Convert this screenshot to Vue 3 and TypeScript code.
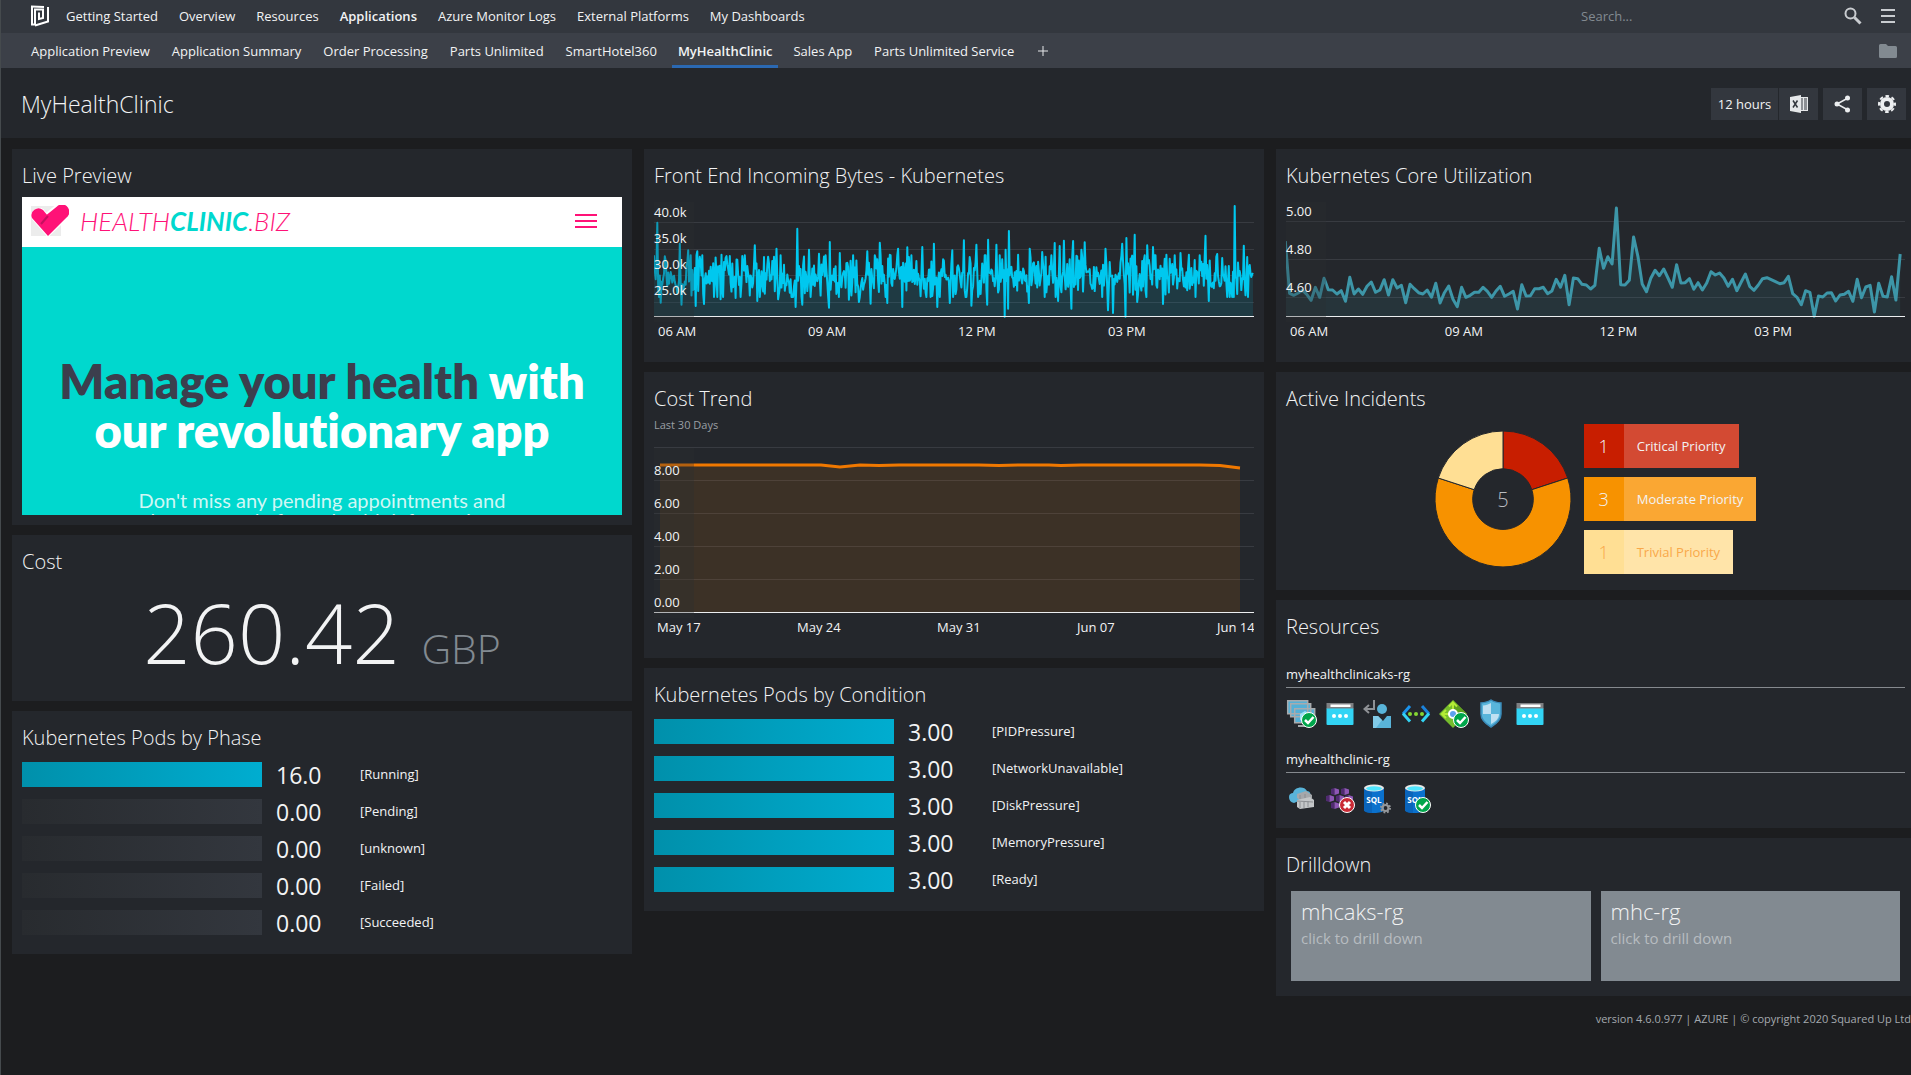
<script setup lang="ts">
interface NavItem { label: string; active?: boolean }
interface PodRow { value: string; label: string; full: boolean }
interface Incident { count: number; label: string; tone: string }

const mainNav: NavItem[] = [
  { label: 'Getting Started' },
  { label: 'Overview' },
  { label: 'Resources' },
  { label: 'Applications', active: true },
  { label: 'Azure Monitor Logs' },
  { label: 'External Platforms' },
  { label: 'My Dashboards' },
]

const subNav: NavItem[] = [
  { label: 'Application Preview' },
  { label: 'Application Summary' },
  { label: 'Order Processing' },
  { label: 'Parts Unlimited' },
  { label: 'SmartHotel360' },
  { label: 'MyHealthClinic', active: true },
  { label: 'Sales App' },
  { label: 'Parts Unlimited Service' },
]

const phases: PodRow[] = [
  { value: '16.0', label: '[Running]', full: true },
  { value: '0.00', label: '[Pending]', full: false },
  { value: '0.00', label: '[unknown]', full: false },
  { value: '0.00', label: '[Failed]', full: false },
  { value: '0.00', label: '[Succeeded]', full: false },
]

const conditions: PodRow[] = [
  { value: '3.00', label: '[PIDPressure]', full: true },
  { value: '3.00', label: '[NetworkUnavailable]', full: true },
  { value: '3.00', label: '[DiskPressure]', full: true },
  { value: '3.00', label: '[MemoryPressure]', full: true },
  { value: '3.00', label: '[Ready]', full: true },
]

const incidents: Incident[] = [
  { count: 1, label: 'Critical Priority', tone: 'critical' },
  { count: 3, label: 'Moderate Priority', tone: 'moderate' },
  { count: 1, label: 'Trivial Priority', tone: 'trivial' },
]

const hours = ['06 AM', '09 AM', '12 PM', '03 PM']
const days = ['May 17', 'May 24', 'May 31', 'Jun 07', 'Jun 14']

type Point = [number, number]
const toLine = (points: Point[]) =>
  points.map(([x, y]) => `${x.toFixed(1)},${y.toFixed(1)}`).join(' ')
const toArea = (points: Point[], base: number) =>
  `${points[0][0].toFixed(1)},${base} ${toLine(points)} ${points[points.length - 1][0].toFixed(1)},${base}`

// Core utilisation, one sample every five minutes, three units per pixel.
const coreSamples = [
  272, 429, 435, 428, 420, 432, 450, 411, 441, 384, 418, 419, 431, 421, 453, 381, 431, 416, 432, 408,
  395, 426, 419, 388, 434, 388, 413, 405, 457, 402, 415, 427, 431, 419, 441, 399, 458, 427, 407, 447,
  469, 411, 441, 435, 426, 426, 411, 423, 441, 422, 408, 438, 431, 423, 476, 403, 437, 436, 415, 415,
  411, 430, 422, 387, 411, 375, 463, 383, 385, 402, 404, 416, 405, 294, 354, 319, 341, 173, 403, 404,
  390, 260, 318, 401, 424, 384, 360, 376, 356, 383, 411, 343, 398, 397, 385, 417, 397, 419, 398, 364,
  374, 368, 383, 408, 387, 421, 396, 371, 408, 420, 404, 385, 382, 388, 394, 400, 397, 378, 430, 441,
  463, 421, 426, 498, 437, 440, 428, 427, 452, 434, 432, 423, 453, 387, 442, 410, 405, 485, 399, 438,
  440, 379, 449, 311,
]
const corePoints: Point[] = coreSamples.map((s, i) => [i * 4.3 - 0.7, (s - 155) / 3])

// Incoming bytes: per-minute noise with the notable peaks and dips pinned.
const pinned: Point[] = [
  [43, 217], [97, 280], [118, 300], [141, 303], [200, 313], [281, 285], [333, 295], [384, 235], [414, 298],
  [437, 310], [465, 275], [488, 308], [557, 303], [587, 277], [611, 313], [631, 295], [654, 291], [690, 290],
  [720, 280], [764, 300], [792, 270], [824, 283], [853, 268], [873, 283], [904, 242], [896, 298], [926, 313],
  [955, 295], [985, 305], [1016, 278], [1027, 287], [1037, 271], [1060, 272], [1080, 298], [1088, 276],
  [1140, 295], [1181, 280], [1191, 263], [1212, 253], [1242, 285], [1256, 290], [1288, 313], [1323, 308],
  [1344, 313], [1384, 256], [1414, 311], [1457, 167], [1478, 286], [1486, 320],
  [51, 457], [102, 463], [137, 467], [157, 461], [198, 447], [234, 443], [286, 452], [337, 447], [381, 470],
  [398, 463], [462, 472], [511, 448], [535, 455], [564, 460], [606, 458], [643, 470], [728, 470], [758, 458],
  [812, 466], [850, 463], [892, 499], [901, 475], [952, 458], [1024, 452], [1056, 475], [1147, 480],
  [1158, 488], [1188, 499], [1217, 455], [1280, 461], [1392, 452],
]
const byteCount = 720
let seed = 20200614
const random = () => {
  seed = (seed * 1664525 + 1013904223) % 4294967296
  return seed / 4294967296
}
const byteLevels: number[] = Array.from({ length: byteCount }, () => {
  const spread = random() + random() + random() - 1.5
  return 380 + Math.max(-65, Math.min(60, spread * 72))
})
for (const [x, y] of pinned) {
  byteLevels[Math.round(((x - 34) / 1467) * (byteCount - 1))] = y
}
byteLevels[byteCount - 3] = 380
byteLevels[byteCount - 2] = 372
byteLevels[byteCount - 1] = 368
const bytePoints: Point[] = byteLevels.map((v, i) => [i * (599 / (byteCount - 1)), (v - 155) / 3])

const costPoints: Point[] = [
  [6, 18], [167, 18], [186, 20], [206, 18], [225, 18.4], [245, 18], [325, 18], [345, 18.6], [365, 18],
  [395, 18], [407, 18.4], [427, 18], [546, 18], [566, 18.6], [586, 21],
]

// Pod glyphs in the Kubernetes service icon.
const cubes: Point[] = [[8, 3], [18, 3], [3, 10], [13, 10], [22, 10], [8, 17]]
const groupA = ['scaleset', 'web', 'identity', 'vnet', 'balancer', 'shield', 'web']
const groupB = ['registry', 'aks', 'sqlserver', 'sqldb']
const groups = [
  { name: 'myhealthclinicaks-rg', icons: groupA },
  { name: 'myhealthclinic-rg', icons: groupB },
]
</script>

<template>
  <div class="page">
    <header>
      <nav class="bar top" aria-label="Main">
        <a href="#" class="brand" aria-label="Home">
          <svg width="20" height="22" viewBox="0 0 20 22" fill="none" stroke="#fff" stroke-width="2">
            <path d="M2 1v18.500h3V4.500h8V13l-4 1V7.500" />
            <path d="M1 1.500l13 .5M18 2v14.500L5 20.500" />
          </svg>
        </a>
        <a v-for="item in mainNav" :key="item.label" href="#" :class="{ active: item.active }">{{ item.label }}</a>
        <div class="tools">
          <input type="search" placeholder="Search..." aria-label="Search" />
          <button type="button" class="plain" aria-label="Run search">
            <svg width="18" height="18" viewBox="0 0 18 18" fill="none" stroke="#c9ccd0" stroke-width="2">
              <circle cx="6.500" cy="6.500" r="5" /><path d="M10.500 10.500l6 6" stroke-width="3" />
            </svg>
          </button>
          <button type="button" class="plain" aria-label="Menu">
            <svg width="14" height="14" viewBox="0 0 14 14" stroke="#c9ccd0" stroke-width="2">
              <path d="M0 1h14M0 7h14M0 13h14" />
            </svg>
          </button>
        </div>
      </nav>
      <nav class="bar sub" aria-label="Applications">
        <a v-for="item in subNav" :key="item.label" href="#" :class="{ active: item.active }">{{ item.label }}</a>
        <button type="button" class="plain plus" aria-label="Add dashboard">
          <svg width="10" height="10" viewBox="0 0 10 10" stroke="#e6e8ea"><path d="M5 0v10M0 5h10" /></svg>
        </button>
        <button type="button" class="plain folder" aria-label="Folders">
          <svg width="18" height="14" viewBox="0 0 18 14" fill="#828a91">
            <path d="M1.500 0H7l2 2h7.500A1.500 1.500 0 0 1 18 3.500v9a1.500 1.500 0 0 1-1.500 1.500h-15A1.500 1.500 0 0 1 0 12.500v-11A1.500 1.500 0 0 1 1.500 0z" />
          </svg>
        </button>
      </nav>
      <div class="heading">
        <h1>MyHealthClinic</h1>
        <div class="actions">
          <div class="joined">
            <button type="button" class="range">12 hours</button>
            <button type="button" aria-label="Export to Excel">
              <svg width="18" height="18" viewBox="0 0 18 18">
                <path d="M10 2h8v14h-8z" fill="#e6e8ea" />
                <path d="M11 4h2M14 4h3M11 6h2M14 6h3M11 8h2M14 8h3M11 10h2M14 10h3M11 12h2M14 12h3M11 14h2M14 14h3" stroke="#33373e" />
                <path d="M0 2l11-2v18L0 16z" fill="#e6e8ea" />
                <path d="M3 5.500l4.500 7M7.500 5.500L3 12.500" stroke="#33373e" stroke-width="1.500" />
              </svg>
            </button>
          </div>
          <button type="button" aria-label="Share">
            <svg width="17" height="18" viewBox="0 0 17 18" fill="#eceef0">
              <path d="M14 3L3 9l11 6" fill="none" stroke="#eceef0" stroke-width="1.500" />
              <circle cx="13.500" cy="3" r="2.500" /><circle cx="3" cy="9" r="2.500" /><circle cx="13.500" cy="15" r="2.500" />
            </svg>
          </button>
          <button type="button" aria-label="Settings">
            <svg width="18" height="18" viewBox="0 0 18 18" fill="none" stroke="#eceef0">
              <circle cx="9" cy="9" r="5" stroke-width="4" />
              <circle cx="9" cy="9" r="8" stroke-width="2" stroke-dasharray="3.600 2.683" stroke-dashoffset="1.800" />
            </svg>
          </button>
        </div>
      </div>
    </header>

    <main class="columns">
      <div class="column">
        <section class="panel live">
          <h2>Live Preview</h2>
          <div class="preview">
            <div class="site-head">
              <svg width="38" height="32" viewBox="0 0 38 32">
                <path d="M0 1h30v30H0z" fill="#ececec" />
                <path d="M17 31L2 14A7 7 0 0 1 12 5l3 4 10-8A7.500 7.500 0 0 1 37 12z" fill="#ff1277" stroke="#fff" stroke-width="2" />
                <path d="M17 31L1 13A7 7 0 0 1 12 5l5 6 9-8.500A7 7 0 0 1 37 11z" fill="#ff1277" />
                <path d="M10 19l7-8" stroke="#c5105f" stroke-width="2" />
              </svg>
              <span class="site-name">HEALTH<b>CLINIC</b>.BIZ</span>
              <button type="button" class="plain site-menu" aria-label="Site menu">
                <svg width="22" height="14" viewBox="0 0 22 14" stroke="#ff1277" stroke-width="2">
                  <path d="M0 1h22M0 7h22M0 13h22" />
                </svg>
              </button>
            </div>
            <div class="hero">
              <p class="claim"><span>Manage your health</span> with<br />our revolutionary app</p>
              <p class="pitch">Don't miss any pending appointments and<br />keep control of your health information</p>
            </div>
          </div>
        </section>

        <section class="panel cost">
          <h2>Cost</h2>
          <p class="amount">260.42 <span>GBP</span></p>
        </section>

        <section class="panel">
          <h2>Kubernetes Pods by Phase</h2>
          <ul class="pods">
            <li v-for="row in phases" :key="row.label">
              <span class="meter" :class="{ full: row.full }"></span>
              <span class="value">{{ row.value }}</span>
              <span class="name">{{ row.label }}</span>
            </li>
          </ul>
        </section>
      </div>

      <div class="column">
        <section class="panel">
          <h2>Front End Incoming Bytes - Kubernetes</h2>
          <div class="chart hourly">
            <svg viewBox="0 0 600 120" preserveAspectRatio="none" width="100%" height="120">
              <path class="grid" d="M0 20.500h600M0 47.500h600M0 73.500h600M0 100.500h600" />
              <polygon :points="toArea(bytePoints, 114)" fill="#00c8ef" fill-opacity="0.120" />
              <polyline :points="toLine(bytePoints)" fill="none" stroke="#00c8ef" stroke-width="2" stroke-linejoin="round" />
              <path class="axis" d="M0 114.500h600" />
              <rect class="shade" width="40" height="120" />
            </svg>
            <div class="ylabels four"><span>40.0k</span><span>35.0k</span><span>30.0k</span><span>25.0k</span></div>
          </div>
          <div class="xlabels"><span v-for="h in hours" :key="h">{{ h }}</span></div>
        </section>

        <section class="panel">
          <h2>Cost Trend</h2>
          <p class="note">Last 30 Days</p>
          <div class="chart">
            <svg viewBox="0 0 600 171" preserveAspectRatio="none" width="100%" height="171">
              <path class="grid" d="M0 .5h600M0 33.500h600M0 66.500h600M0 99.500h600M0 132.500h600" />
              <polygon :points="toArea(costPoints, 165)" fill="#f07800" fill-opacity="0.120" />
              <polyline :points="toLine(costPoints)" fill="none" stroke="#f07800" stroke-width="3" />
              <path class="axis" d="M0 165.500h600" />
              <rect class="shade" y="1" width="40" height="170" />
            </svg>
            <div class="ylabels five"><span>8.00</span><span>6.00</span><span>4.00</span><span>2.00</span><span>0.00</span></div>
          </div>
          <div class="xlabels days"><span v-for="d in days" :key="d">{{ d }}</span></div>
        </section>

        <section class="panel">
          <h2>Kubernetes Pods by Condition</h2>
          <ul class="pods">
            <li v-for="row in conditions" :key="row.label">
              <span class="meter" :class="{ full: row.full }"></span>
              <span class="value">{{ row.value }}</span>
              <span class="name">{{ row.label }}</span>
            </li>
          </ul>
        </section>
      </div>

      <div class="column last">
        <section class="panel">
          <h2>Kubernetes Core Utilization</h2>
          <div class="chart hourly">
            <svg viewBox="0 0 619 120" preserveAspectRatio="none" width="100%" height="120">
              <path class="grid" d="M0 19.500h619M0 57.500h619M0 95.500h619" />
              <polygon :points="toArea(corePoints, 114)" fill="#3d96a8" fill-opacity="0.120" />
              <polyline :points="toLine(corePoints)" fill="none" stroke="#3d96a8" stroke-width="3" stroke-linejoin="round" />
              <path class="axis" d="M0 114.500h619" />
              <rect class="shade" width="40" height="120" />
            </svg>
            <div class="ylabels three"><span>5.00</span><span>4.80</span><span>4.60</span></div>
          </div>
          <div class="xlabels"><span v-for="h in hours" :key="h">{{ h }}</span></div>
        </section>

        <section class="panel">
          <h2>Active Incidents</h2>
          <div class="incidents">
            <svg width="136" height="136" viewBox="-68 -68 136 136" stroke="#24272c" stroke-width="1">
              <path d="M0-68A68 68 0 0 1 64.700-21L28.800-9.300A30.300 30.300 0 0 0 0-30.300z" fill="#c81e00" />
              <path d="M64.700-21A68 68 0 1 1-64.700-21L-28.800-9.300A30.300 30.300 0 1 0 28.800-9.300z" fill="#f79200" />
              <path d="M-64.700-21A68 68 0 0 1 0-68V-30.300A30.300 30.300 0 0 0-28.800-9.300z" fill="#ffdf94" />
              <text y="8" text-anchor="middle" class="total">5</text>
            </svg>
            <ul>
              <li v-for="i in incidents" :key="i.label" :class="i.tone"><b>{{ i.count }}</b><span>{{ i.label }}</span></li>
            </ul>
          </div>
        </section>

        <section class="panel resources">
          <h2>Resources</h2>
          <div v-for="g in groups" :key="g.name" class="group">
            <h3>{{ g.name }}</h3>
            <div class="icons">
              <svg v-for="(icon, n) in g.icons" :key="n" width="32" height="32" viewBox="0 0 32 32">
                <template v-if="icon === 'scaleset'">
                  <g fill="#55b0d6" stroke="#a8abae" stroke-width="1.500">
                    <path d="M1.700 2.700h20v13h-20zM4.700 5.700h20v13h-20zM8.700 10.700h20v14h-20z" />
                  </g>
                  <path d="M12 27h12v2H12z" fill="#a8abae" />
                  <path d="M14 16l5-3 5 3v6l-5 2-5-2z" fill="#9be3f8" />
                </template>
                <template v-else-if="icon === 'web'">
                  <path d="M2.500 5h27v6h-27z" fill="#7e8083" />
                  <path d="M6.500 6.500h20v2.500h-20z" fill="#fff" />
                  <path d="M2.500 10.500h27V26a1 1 0 0 1-1 1h-25a1 1 0 0 1-1-1z" fill="#32d4f5" />
                  <g fill="#fff"><circle cx="10" cy="18" r="2" /><circle cx="16" cy="18" r="2" /><circle cx="22" cy="18" r="2" /></g>
                </template>
                <template v-else-if="icon === 'identity'">
                  <path d="M12 2v9H3M7 7l-4.500 4L7 15" fill="none" stroke="#8f9296" stroke-width="2" />
                  <circle cx="20" cy="11" r="5" fill="#59b4d9" />
                  <path d="M11 18h5l5 5 4-5h4v12H11z" fill="#59b4d9" />
                  <path d="M11 18h5l4 4-6 8h-3z" fill="#82cbe8" />
                </template>
                <template v-else-if="icon === 'vnet'">
                  <g fill="none" stroke-width="3">
                    <path d="M10 8l-7 8" stroke="#1b93eb" /><path d="M3 15.500l7 8" stroke="#32d4f5" />
                    <path d="M22 8l7 8" stroke="#1b83db" /><path d="M29 15.500l-7 8" stroke="#32d4f5" />
                  </g>
                  <g fill="#86d633"><circle cx="10" cy="16" r="2" /><circle cx="16" cy="16" r="2" /><circle cx="22" cy="16" r="2" /></g>
                </template>
                <template v-else-if="icon === 'balancer'">
                  <path d="M15 2l14 14-14 14L1 16z" fill="#76bc2d" />
                  <path d="M15 2l14 14H15z" fill="#5ea01f" />
                  <path d="M15 5v8M11 8.500l4-4 4 4M11 16H4M8 12l-4 4 4 4M26 16h-8" fill="none" stroke="#b4ec36" stroke-width="2" />
                  <circle cx="15" cy="16" r="4" fill="#5ea0ef" stroke="#fff" stroke-width="2" />
                </template>
                <template v-else-if="icon === 'shield'">
                  <path d="M15 2c3 2 6 2.500 10 3v11c0 6-5 10-10 13C10 26 5 22 5 16V5c4-.5 7-1 10-3z" fill="#58b5db" stroke="#3a8ab8" stroke-width="1.500" />
                  <path d="M15 5v11H7V7.500c3 0 5-1 8-2.500zM15 16h8c0 5-4 8-8 10z" fill="#bfe0f2" />
                </template>
                <template v-else-if="icon === 'registry'">
                  <path d="M8 20a6 6 0 0 1-5-6c0-3 2-4 4-4 1-6 11-8 14-2 3 0 4 3 3 5z" fill="#59b4d9" />
                  <path d="M11 11l9-3 6 4v3L14 17l-3-2z" fill="#a5a8ab" />
                  <path d="M11 17l13-3 4 3v7l-14 2-3-2z" fill="#c3c6c8" />
                  <path d="M14 19v6M18 19v6M22 18v6M14 12v4M19 11v4M11 18l16 1" stroke="#8b8e92" stroke-width="1" />
                </template>
                <template v-else-if="icon === 'aks'">
                  <g v-for="(c, k) in cubes" :key="k" :transform="`translate(${c[0] - 1} ${c[1] + 2})`">
                    <path d="M0 1l3.500-1v7L0 6z" fill="#4f2a70" /><path d="M3.500 0L8 1.500v4L3.500 7z" fill="#8e57b5" />
                  </g>
                </template>
                <template v-else>
                  <g :transform="icon === 'sqldb' ? 'translate(3 0)' : ''">
                    <path d="M2 5v22c0 4 20 4 20 0V5z" fill="#0a71cd" />
                    <path d="M2 5v22c0 2 4 3 8 3V5z" fill="#0a64ba" />
                    <ellipse cx="12" cy="5" rx="10" ry="3.500" fill="#e8e8e8" />
                    <ellipse cx="12" cy="5.500" rx="8" ry="2.200" fill="#50e6ff" />
                    <text x="12" y="20" text-anchor="middle" class="sql">SQL</text>
                  </g>
                  <g v-if="icon === 'sqlserver'" fill="none" stroke="#94979a">
                    <circle cx="23.500" cy="25" r="3" stroke-width="2.200" />
                    <circle cx="23.500" cy="25" r="4.500" stroke-width="2" stroke-dasharray="1.800 1.734" />
                  </g>
                </template>
                <g v-if="icon === 'scaleset' || icon === 'balancer' || icon === 'sqldb'" fill="none" stroke="#fff">
                  <circle cx="23" cy="22" r="7.500" fill="#00a64b" /><path d="M19 22l3 3 5.500-6" stroke-width="2.500" />
                </g>
                <g v-if="icon === 'aks'" fill="none" stroke="#fff">
                  <circle cx="23" cy="22" r="7.500" fill="#c92a35" /><path d="M20 19l6 6M26 19l-6 6" stroke-width="3" />
                </g>
              </svg>
            </div>
          </div>
        </section>

        <section class="panel">
          <h2>Drilldown</h2>
          <div class="tiles">
            <a href="#"><strong>mhcaks-rg</strong><span>click to drill down</span></a>
            <a href="#"><strong>mhc-rg</strong><span>click to drill down</span></a>
          </div>
        </section>

        <footer>version 4.6.0.977 | AZURE | © copyright 2020 Squared Up Ltd</footer>
      </div>
    </main>
  </div>
</template>

<style>
body {
  margin: 0;
  background: #1c1d1f;
}
</style>

<style scoped>
* {
  box-sizing: border-box;
}
.page {
  min-height: 100vh;
  overflow: hidden;
  background: #1c1d1f;
  border-left: 1px solid #454a4d;
  color: #f2f3f4;
  font-family: "Open Sans", "Noto Sans", sans-serif;
  font-size: 13px;
  line-height: 20px;
}
a {
  color: inherit;
  text-decoration: none;
}
svg {
  display: block;
}
h1, h2, h3, p, ul {
  margin: 0;
  padding: 0;
  list-style: none;
}
button {
  display: flex;
  align-items: center;
  justify-content: center;
  height: 32px;
  padding: 0 10px;
  border: 0;
  background: #33373e;
  color: inherit;
  font: inherit;
}
.plain {
  height: auto;
  padding: 0;
  background: none;
}
.bar {
  display: flex;
  align-items: center;
  white-space: nowrap;
}
.bar .active {
  font-weight: 600;
}
.top {
  gap: 21px;
  height: 33px;
  padding: 0 16px 2px 29px;
  background: #33373e;
}
.top .brand {
  width: 20px;
  margin-right: -5px;
}
.tools {
  display: flex;
  align-items: center;
  gap: 19px;
  margin-left: auto;
}
.tools input {
  width: 244px;
  padding: 0;
  border: 0;
  outline: 0;
  background: none;
  color: #eceef0;
  font: inherit;
}
.tools input::placeholder {
  color: #828a91;
  opacity: 1;
}
.sub {
  gap: 22px;
  height: 35px;
  padding: 0 14px 0 30px;
  background: #3c4048;
}
.sub a {
  line-height: 36px;
}
.sub .active {
  height: 35px;
  margin: 0 -7px;
  padding: 0 6px;
  border-bottom: 3px solid #2b69b3;
}
.plus {
  margin-left: 2px;
}
.folder {
  margin-left: auto;
}
.heading {
  display: flex;
  align-items: center;
  justify-content: space-between;
  height: 70px;
  padding: 2px 5px 0 20px;
  background: #24272c;
}
h1 {
  font-size: 23px;
  font-weight: 300;
  line-height: 32px;
}
.actions {
  display: flex;
  gap: 5px;
}
.actions button {
  width: 39px;
}
.joined {
  display: flex;
  gap: 1px;
}
.actions .range {
  width: 67px;
  padding: 0;
}
.columns {
  display: grid;
  grid-template-columns: 620fr 620fr 635fr;
  gap: 12px;
  padding: 11px 0 0 11px;
}
.column {
  display: flex;
  flex-direction: column;
  gap: 10px;
  min-width: 0;
}
.panel {
  padding: 10px;
  background: #24272c;
}
.last .panel {
  padding-right: 6px;
}
h2 {
  height: 38px;
  font-size: 20px;
  font-weight: 300;
  line-height: 34px;
}
.preview {
  height: 318px;
  overflow: hidden;
  background: #00d8ce;
  color: #fff;
  font-family: Lato, "Open Sans", sans-serif;
}
.site-head {
  display: flex;
  align-items: center;
  height: 50px;
  padding: 0 25px 2px 9px;
  background: #fff;
}
.site-name {
  margin-left: 11px;
  color: #ff1277;
  font-size: 26px;
  font-style: italic;
  font-weight: 300;
}
.site-name b {
  color: #00d8ce;
  font-weight: 700;
}
.site-menu {
  margin-left: auto;
}
.hero {
  padding-top: 110px;
  text-align: center;
  white-space: nowrap;
}
.claim {
  font-size: 47px;
  font-variant-ligatures: none;
  font-weight: 800;
  line-height: 49px;
}
.claim span {
  color: #3c3e4d;
}
.pitch {
  margin-top: 35px;
  color: #d0f7f5;
  font-size: 20px;
  line-height: 20px;
}
.cost {
  height: 166px;
}
.amount {
  text-align: center;
  font-size: 83px;
  font-weight: 300;
  line-height: 98px;
}
.amount span {
  color: #828a91;
  font-size: 41px;
}
.pods {
  display: flex;
  flex-direction: column;
  gap: 12px;
  padding: 3px 0 9px;
}
.pods li {
  display: flex;
  align-items: center;
  height: 25px;
}
.meter {
  width: 40%;
  height: 25px;
  background: linear-gradient(90deg, #282b2f, #33373e);
}
.meter.full {
  background: linear-gradient(90deg, #0090ab, #00add0);
}
.value {
  width: 84px;
  margin-left: 14px;
  font-size: 23px;
}
.name {
  padding-bottom: 2px;
}
.note {
  height: 27px;
  color: #9a9fa4;
  font-size: 11px;
  line-height: 10px;
}
.chart {
  position: relative;
}
.hourly {
  margin-top: 5px;
}
.grid {
  fill: none;
  stroke: #383b41;
}
.axis {
  fill: none;
  stroke: #eceef0;
}
.shade {
  fill: #2b2e33;
  fill-opacity: 0.3;
}
.ylabels {
  position: absolute;
  top: 0;
  left: 0;
  display: flex;
  flex-direction: column;
}
.four {
  line-height: 26px;
  top: -3px;
}
.three {
  line-height: 38px;
  top: -10px;
}
.five {
  line-height: 33px;
  top: 7px;
}
.xlabels {
  display: grid;
  grid-template-columns: repeat(4, 25%);
  height: 30px;
  overflow: hidden;
  line-height: 18px;
  white-space: nowrap;
}
.xlabels span {
  min-width: 0;
  padding-left: 4px;
}
.days {
  grid-template-columns: repeat(4, 140fr) 40fr;
}
.days span {
  padding-left: 3px;
}
.incidents {
  display: flex;
  align-items: center;
  justify-content: center;
  gap: 13px;
  padding: 4px 0 6px;
}
.total {
  fill: #b9bcc0;
  stroke: none;
  font-size: 20px;
  font-weight: 300;
}
.incidents ul {
  display: flex;
  flex-direction: column;
  align-items: flex-start;
  gap: 9px;
}
.incidents li {
  display: flex;
  height: 44px;
  line-height: 44px;
}
.incidents b {
  width: 40px;
  font-size: 18px;
  font-weight: 300;
  text-align: center;
}
.incidents li span {
  padding: 0 13px;
}
.critical {
  background: #d34a33;
}
.critical b {
  background: #c81e00;
}
.moderate {
  background: #faa733;
}
.moderate b {
  background: #f79200;
}
.trivial {
  background: #ffe4a9;
  color: #f9a84a;
}
.trivial b {
  background: #ffdf94;
}
.resources {
  padding-bottom: 11px;
}
.resources h2 {
  height: 37px;
}
.group {
  height: 85px;
  padding-top: 17px;
}
h3 {
  padding-bottom: 3px;
  border-bottom: 1px solid #85898e;
  font-size: 13px;
  font-weight: 400;
}
.icons {
  display: flex;
  gap: 6px;
  padding-top: 10px;
}
.sql {
  fill: #fff;
  font-size: 8px;
  font-weight: 700;
}
.tiles {
  display: grid;
  grid-template-columns: 1fr 1fr;
  gap: 10px;
  padding: 5px;
}
.tiles a {
  height: 90px;
  padding: 5px 10px;
  background: #828a91;
}
.tiles strong,
.tiles span {
  display: block;
  font-size: 22px;
  font-weight: 300;
  line-height: 30px;
}
.tiles span {
  color: #b7bcc0;
  font-size: 15px;
  font-weight: 400;
  line-height: 24px;
}
footer {
  padding-top: 3px;
  color: #a4a9ae;
  font-size: 11px;
  text-align: right;
  white-space: nowrap;
}
</style>
